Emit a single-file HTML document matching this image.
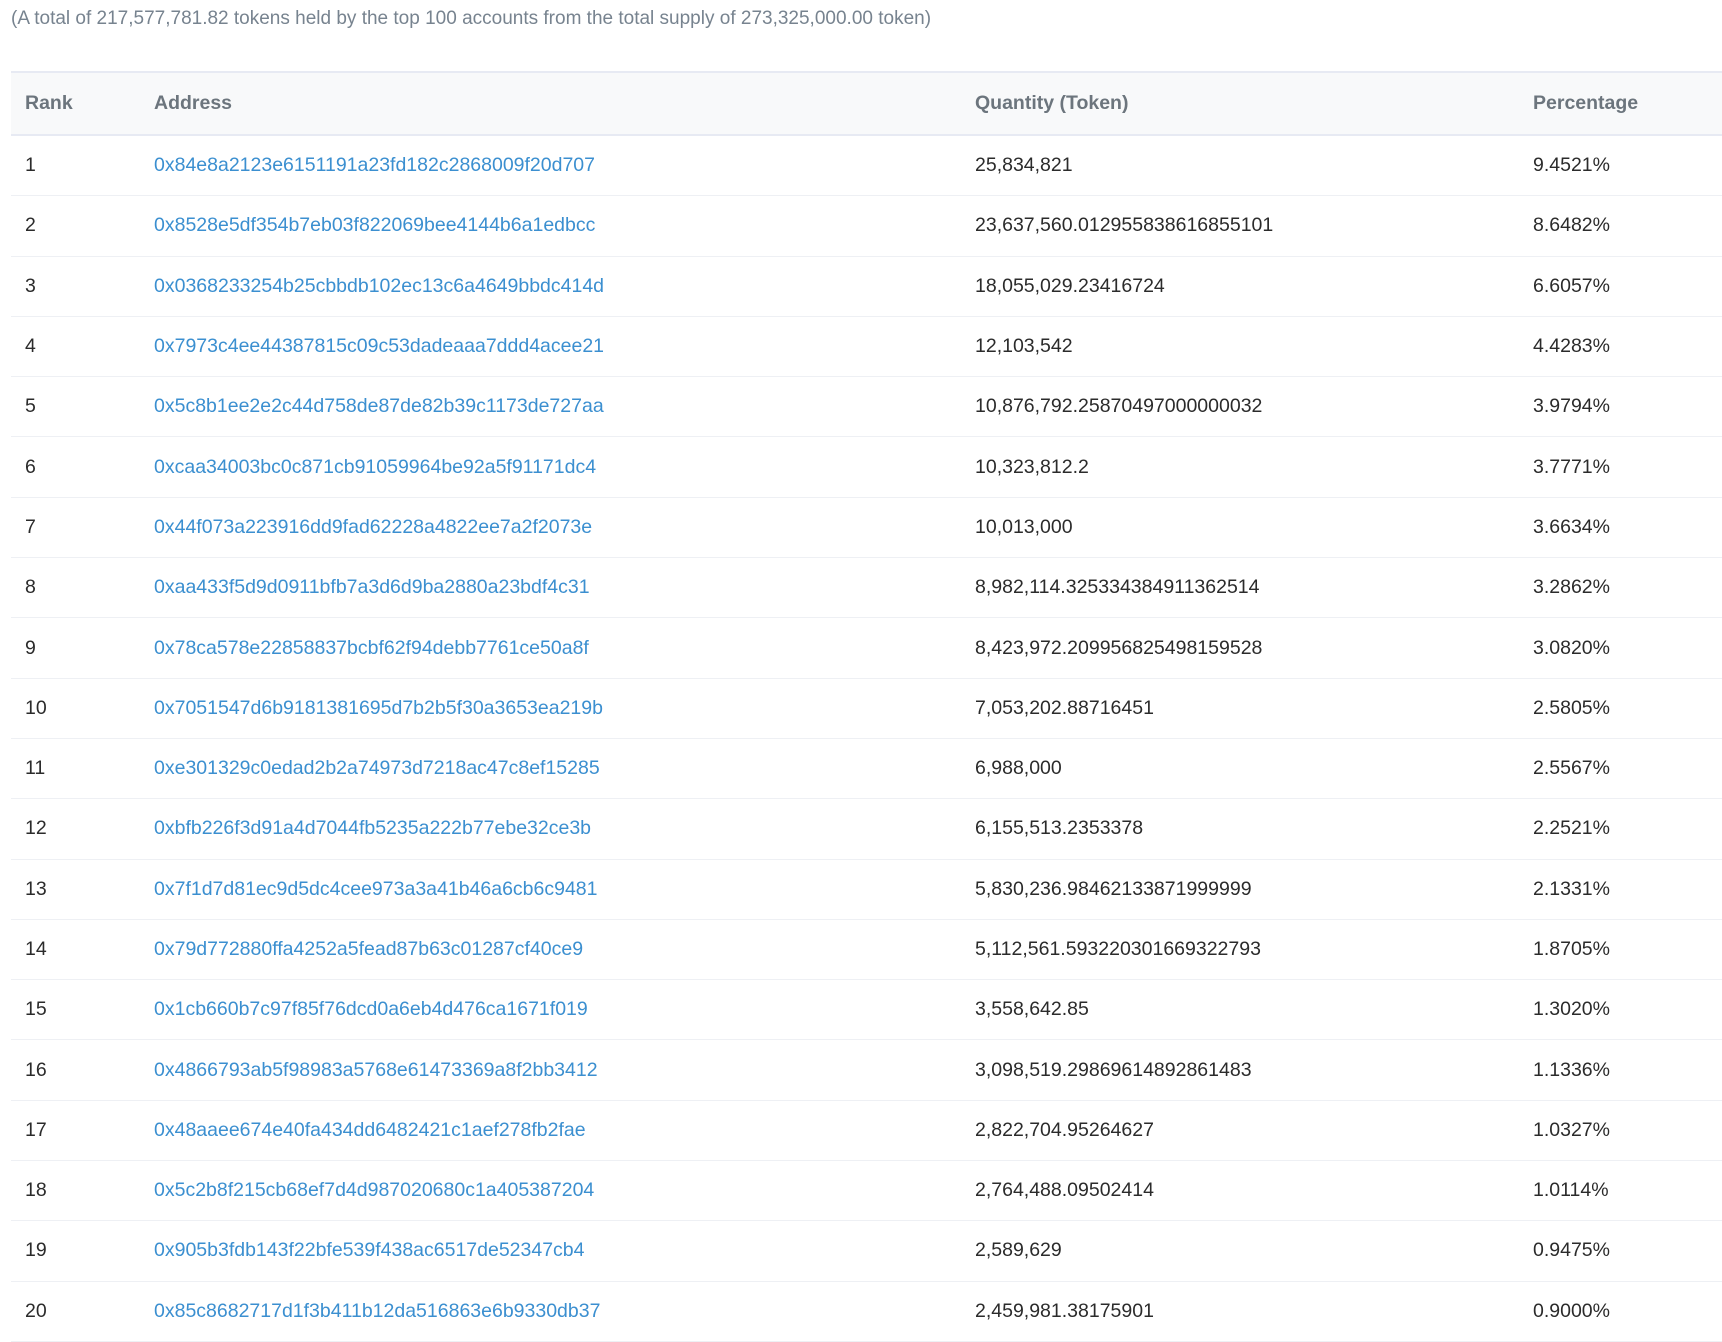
<!DOCTYPE html>
<html><head><meta charset="utf-8"><style>
body{margin:0;background:#fff;font-family:"Liberation Sans",sans-serif;width:1722px;height:1341px;overflow:hidden}
.top{position:absolute;left:11px;top:8px;font-size:19px;color:#77838f;white-space:nowrap}
table{position:absolute;left:11px;top:71px;width:1711px;border-collapse:collapse;font-size:19.5px}
th{background:#f8f9fa;color:#6c757d;font-weight:bold;text-align:left;height:61px;border-top:2px solid #e7eaf3;border-bottom:2px solid #e7eaf3;padding:0}
td{height:59.3px;border-bottom:1px solid #eef0f4;padding:0;color:#2b2b2b}
.c1{padding-left:14px;width:129px}
.c2{width:821px}
.c3{width:558px}
a{color:#3b8fd0;text-decoration:none}
</style></head><body>
<div class="top">(A total of 217,577,781.82 tokens held by the top 100 accounts from the total supply of 273,325,000.00 token)</div>
<table>
<tr><th class="c1">Rank</th><th class="c2">Address</th><th class="c3">Quantity (Token)</th><th>Percentage</th></tr>
<tr><td class="c1">1</td><td><a>0x84e8a2123e6151191a23fd182c2868009f20d707</a></td><td>25,834,821</td><td>9.4521%</td></tr>
<tr><td class="c1">2</td><td><a>0x8528e5df354b7eb03f822069bee4144b6a1edbcc</a></td><td>23,637,560.012955838616855101</td><td>8.6482%</td></tr>
<tr><td class="c1">3</td><td><a>0x0368233254b25cbbdb102ec13c6a4649bbdc414d</a></td><td>18,055,029.23416724</td><td>6.6057%</td></tr>
<tr><td class="c1">4</td><td><a>0x7973c4ee44387815c09c53dadeaaa7ddd4acee21</a></td><td>12,103,542</td><td>4.4283%</td></tr>
<tr><td class="c1">5</td><td><a>0x5c8b1ee2e2c44d758de87de82b39c1173de727aa</a></td><td>10,876,792.25870497000000032</td><td>3.9794%</td></tr>
<tr><td class="c1">6</td><td><a>0xcaa34003bc0c871cb91059964be92a5f91171dc4</a></td><td>10,323,812.2</td><td>3.7771%</td></tr>
<tr><td class="c1">7</td><td><a>0x44f073a223916dd9fad62228a4822ee7a2f2073e</a></td><td>10,013,000</td><td>3.6634%</td></tr>
<tr><td class="c1">8</td><td><a>0xaa433f5d9d0911bfb7a3d6d9ba2880a23bdf4c31</a></td><td>8,982,114.325334384911362514</td><td>3.2862%</td></tr>
<tr><td class="c1">9</td><td><a>0x78ca578e22858837bcbf62f94debb7761ce50a8f</a></td><td>8,423,972.209956825498159528</td><td>3.0820%</td></tr>
<tr><td class="c1">10</td><td><a>0x7051547d6b9181381695d7b2b5f30a3653ea219b</a></td><td>7,053,202.88716451</td><td>2.5805%</td></tr>
<tr><td class="c1">11</td><td><a>0xe301329c0edad2b2a74973d7218ac47c8ef15285</a></td><td>6,988,000</td><td>2.5567%</td></tr>
<tr><td class="c1">12</td><td><a>0xbfb226f3d91a4d7044fb5235a222b77ebe32ce3b</a></td><td>6,155,513.2353378</td><td>2.2521%</td></tr>
<tr><td class="c1">13</td><td><a>0x7f1d7d81ec9d5dc4cee973a3a41b46a6cb6c9481</a></td><td>5,830,236.98462133871999999</td><td>2.1331%</td></tr>
<tr><td class="c1">14</td><td><a>0x79d772880ffa4252a5fead87b63c01287cf40ce9</a></td><td>5,112,561.593220301669322793</td><td>1.8705%</td></tr>
<tr><td class="c1">15</td><td><a>0x1cb660b7c97f85f76dcd0a6eb4d476ca1671f019</a></td><td>3,558,642.85</td><td>1.3020%</td></tr>
<tr><td class="c1">16</td><td><a>0x4866793ab5f98983a5768e61473369a8f2bb3412</a></td><td>3,098,519.29869614892861483</td><td>1.1336%</td></tr>
<tr><td class="c1">17</td><td><a>0x48aaee674e40fa434dd6482421c1aef278fb2fae</a></td><td>2,822,704.95264627</td><td>1.0327%</td></tr>
<tr><td class="c1">18</td><td><a>0x5c2b8f215cb68ef7d4d987020680c1a405387204</a></td><td>2,764,488.09502414</td><td>1.0114%</td></tr>
<tr><td class="c1">19</td><td><a>0x905b3fdb143f22bfe539f438ac6517de52347cb4</a></td><td>2,589,629</td><td>0.9475%</td></tr>
<tr><td class="c1">20</td><td><a>0x85c8682717d1f3b411b12da516863e6b9330db37</a></td><td>2,459,981.38175901</td><td>0.9000%</td></tr>
</table>
</body></html>
